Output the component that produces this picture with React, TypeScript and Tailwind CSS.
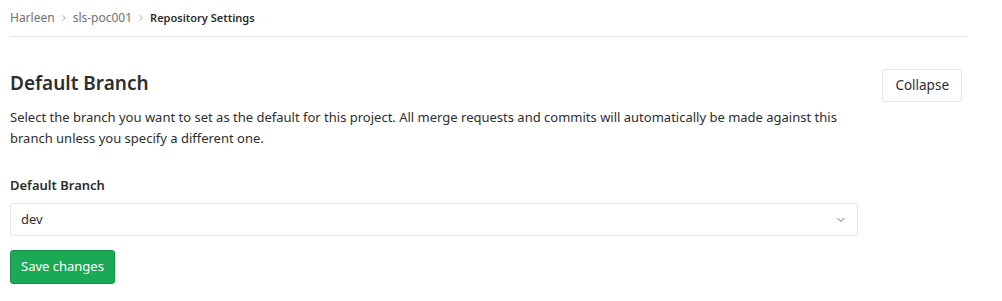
import React from "react";
import { ChevronRight, ChevronDown } from "lucide-react";

const font = { fontFamily: '"Noto Sans", "Open Sans", sans-serif' };

const Breadcrumbs: React.FC = () => (
  <nav className="flex h-[37px] items-center border-b border-[#e5e5e5] text-[12px] text-[#707070]">
    <span>Harleen</span>
    <ChevronRight size={10} className="mx-[4px] text-[#999]" />
    <span>sls-poc001</span>
    <ChevronRight size={10} className="mx-[4px] text-[#999]" />
    <span className="text-[11px] font-semibold text-[#2e2e2e]">Repository Settings</span>
  </nav>
);

export default function App() {
  return (
    <div className="bg-white pl-[10px] text-[#2e2e2e]" style={font}>
      <div className="w-[957px]">
        <Breadcrumbs />
        <section className="flex pt-[32px]">
          <div className="w-[848px]">
            <h4 className="text-[19px] font-semibold leading-[28px] text-[#2e2e2e]">
              Default Branch
            </h4>
            <p className="mt-[10px] text-[13px] leading-[21px]">
              Select the branch you want to set as the default for this project. All merge requests and commits will automatically be made against this branch unless you specify a different one.
            </p>
            <div className="mt-[26px]">
              <label className="block text-[13px] font-semibold leading-[20px]">
                Default Branch
              </label>
              <div className="mt-[8px] flex h-[33px] items-center justify-between rounded-[3px] border border-[#e5e5e5] pl-[10px] pr-[10px] text-[13px]">
                <span>dev</span>
                <ChevronDown size={12} strokeWidth={3} className="text-[#b5b5b5]" />
              </div>
            </div>
            <button className="mt-[14px] h-[34px] rounded-[3px] border border-[#168f48] bg-[#1aaa55] px-[10px] text-[13px] text-white">
              Save changes
            </button>
          </div>
          <div className="flex flex-1 justify-end pr-[5px]">
            <button className="h-[33px] rounded-[3px] border border-[#e5e5e5] bg-white px-[12px] text-[13.5px] text-[#2e2e2e]">
              Collapse
            </button>
          </div>
        </section>
      </div>
    </div>
  );
}
